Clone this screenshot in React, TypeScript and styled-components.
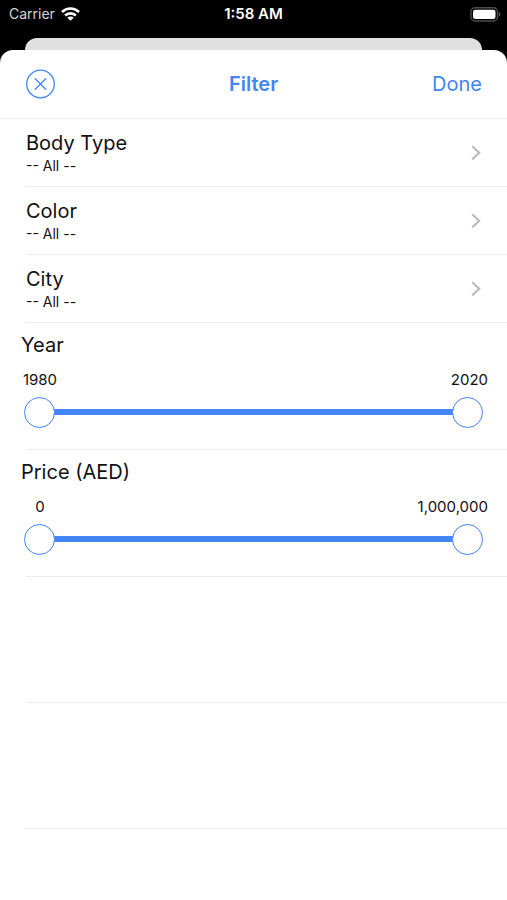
import React, { useId, useState } from 'react';
import styled, { createGlobalStyle } from 'styled-components';

const blue = '#4285f4';
const line = '#ececec';

const GlobalStyle = createGlobalStyle`
  * { box-sizing: border-box; }
  html, body { margin: 0; background: #fff; }
  body, button, input { font-family: Inter, 'Liberation Sans', sans-serif; }
  button { border: 0; padding: 0; background: none; color: inherit; cursor: pointer; }
`;

const Screen = styled.div`
  min-height: 100vh;
  display: flex;
  flex-direction: column;
  background: #000;
`;

const StatusBar = styled.header`
  display: grid;
  grid-template-columns: 1fr auto 1fr;
  align-items: center;
  height: 28px;
  padding: 0 6px;
  color: #fff;
  font-size: 14px;
  line-height: 16px;
`;

const Carrier = styled.span`
  display: flex;
  align-items: center;
  gap: 6px;
  padding-left: 3px;
  color: #d6d6d6;
`;

const Clock = styled.time`
  font-size: 15px;
  font-weight: 600;
`;

const BatterySlot = styled.span`
  display: flex;
  justify-content: flex-end;
`;

const BackCard = styled.div`
  height: 12px;
  margin: 10px 25px 0;
  border-radius: 12px 12px 0 0;
  background: #e0e0e0;
`;

const Sheet = styled.main`
  flex: 1;
  border-radius: 13px 13px 0 0;
  background: #fff;
  color: #111;
`;

const TitleBar = styled.div`
  display: grid;
  grid-template-columns: 1fr auto 1fr;
  align-items: center;
  height: 69px;
  padding: 0 25px;
  border-bottom: 1px solid ${line};
  color: ${blue};
`;

const CloseButton = styled.button`
  justify-self: start;
  display: flex;
`;

const Title = styled.h1`
  margin: 0;
  font-size: 20px;
  line-height: 24px;
  font-weight: 600;
`;

const DoneButton = styled.button`
  justify-self: end;
  font-size: 20px;
  line-height: 24px;
`;

const Group = styled.div`
  margin-left: 26px;
  border-bottom: 1px solid ${line};
`;

const PickerRow = styled.button`
  display: flex;
  align-items: center;
  justify-content: space-between;
  width: 100%;
  height: 67px;
  padding-right: 26px;
  text-align: left;
  color: #111;
`;

const PickerText = styled.span`
  display: flex;
  flex-direction: column;
`;

const Label = styled.span`
  font-size: 20px;
  line-height: 26px;
`;

const Value = styled.span`
  font-size: 14px;
  line-height: 20px;
`;

const RangeGroup = styled.section`
  height: 126px;
  padding-top: 9px;
`;

const RangeTitle = styled.h2`
  margin: 0 0 0 -5px;
  font-size: 20px;
  line-height: 26px;
  font-weight: 400;
`;

const RangeValues = styled.div`
  display: flex;
  justify-content: space-between;
  margin: 12px 19px 7px -4px;
`;

const RangeValue = styled.output`
  min-width: 36px;
  text-align: center;
  font-size: 15px;
  line-height: 20px;
`;

const SliderArea = styled.div`
  position: relative;
  height: 31px;
  margin: 0 24px 0 -2px;
`;

const Rail = styled.div`
  position: absolute;
  top: 12px;
  left: 15px;
  right: 15px;
  height: 6px;
  background: #d9d9d9;
`;

const Fill = styled.div`
  position: absolute;
  top: 0;
  bottom: 0;
  background: ${blue};
`;

const Thumb = styled.input`
  position: absolute;
  inset: 0;
  width: 100%;
  height: 31px;
  margin: 0;
  appearance: none;
  background: transparent;
  pointer-events: none;

  &::-webkit-slider-thumb {
    appearance: none;
    width: 31px;
    height: 31px;
    border: 1px solid ${blue};
    border-radius: 50%;
    background: #fff;
    pointer-events: auto;
    cursor: pointer;
  }
`;

const EmptyCell = styled.div`
  height: 125px;
`;

function WifiIcon() {
  return (
    <svg width="19" height="14" viewBox="0 0 19 14" fill="none" stroke="#fff" strokeWidth="2.6" aria-hidden="true">
      <path d="M1 5a12.2 12.2 0 0 1 17 0" />
      <path d="M4.1 8.5a7.8 7.8 0 0 1 10.8 0" />
      <path d="M9.5 13.8 6.3 10.8a4.5 4.5 0 0 1 6.4 0z" fill="#fff" stroke="none" />
    </svg>
  );
}

function BatteryIcon() {
  return (
    <svg width="31" height="15" viewBox="0 0 31 15" aria-hidden="true">
      <rect x="1" y="0.8" width="26.5" height="13.2" rx="4" fill="none" stroke="#4c4c4c" strokeWidth="1.4" />
      <rect x="3" y="2.8" width="22.5" height="9.2" rx="2.2" fill="#fff" />
      <path d="M28.8 5.1c2 .8 2 3.8 0 4.6z" fill="#5c5c5c" />
    </svg>
  );
}

function CloseIcon() {
  return (
    <svg width="30" height="30" viewBox="0 0 30 30" fill="none" stroke={blue} strokeWidth="1.3" aria-hidden="true">
      <circle cx="15.5" cy="15" r="13.8" />
      <path d="m10.2 9.7 10.6 10.6m0-10.6L10.2 20.3" strokeLinecap="round" />
    </svg>
  );
}

function Chevron() {
  return (
    <svg width="10" height="16" viewBox="0 0 10 16" fill="none" stroke="#bdbdbd" strokeWidth="2.2" aria-hidden="true">
      <path d="m1.2 1.2 7 6.6-7 6.6" />
    </svg>
  );
}

function Picker({ label, value }: { label: string; value: string }) {
  return (
    <Group>
      <PickerRow type="button">
        <PickerText>
          <Label>{label}</Label>
          <Value>{value}</Value>
        </PickerText>
        <Chevron />
      </PickerRow>
    </Group>
  );
}

interface RangeProps {
  label: string;
  min: number;
  max: number;
  step: number;
  format: (n: number) => string;
}

function Range({ label, min, max, step, format }: RangeProps) {
  const id = useId();
  const [low, setLow] = useState(min);
  const [high, setHigh] = useState(max);
  const percent = (n: number) => ((n - min) / (max - min)) * 100;

  return (
    <Group>
      <RangeGroup aria-labelledby={`${id}-title`}>
        <RangeTitle id={`${id}-title`}>{label}</RangeTitle>
        <RangeValues>
          <RangeValue htmlFor={`${id}-low`}>{format(low)}</RangeValue>
          <RangeValue htmlFor={`${id}-high`}>{format(high)}</RangeValue>
        </RangeValues>
        <SliderArea>
          <Rail>
            <Fill style={{ left: `${percent(low)}%`, right: `${100 - percent(high)}%` }} />
          </Rail>
          <Thumb
            id={`${id}-low`}
            type="range"
            aria-label={`${label} minimum`}
            min={min}
            max={max}
            step={step}
            value={low}
            onChange={(e) => setLow(Math.min(Number(e.target.value), high))}
          />
          <Thumb
            id={`${id}-high`}
            type="range"
            aria-label={`${label} maximum`}
            min={min}
            max={max}
            step={step}
            value={high}
            onChange={(e) => setHigh(Math.max(Number(e.target.value), low))}
          />
        </SliderArea>
      </RangeGroup>
    </Group>
  );
}

export default function App() {
  return (
    <>
      <GlobalStyle />
      <Screen>
        <StatusBar>
          <Carrier>
            Carrier
            <WifiIcon />
          </Carrier>
          <Clock>1:58 AM</Clock>
          <BatterySlot>
            <BatteryIcon />
          </BatterySlot>
        </StatusBar>
        <BackCard />
        <Sheet>
          <TitleBar>
            <CloseButton type="button" aria-label="Close">
              <CloseIcon />
            </CloseButton>
            <Title>Filter</Title>
            <DoneButton type="button">Done</DoneButton>
          </TitleBar>
          <Picker label="Body Type" value="-- All --" />
          <Picker label="Color" value="-- All --" />
          <Picker label="City" value="-- All --" />
          <Range label="Year" min={1980} max={2020} step={1} format={String} />
          <Range
            label="Price (AED)"
            min={0}
            max={1000000}
            step={1000}
            format={(n) => n.toLocaleString('en-US')}
          />
          <Group>
            <EmptyCell />
          </Group>
          <Group>
            <EmptyCell />
          </Group>
        </Sheet>
      </Screen>
    </>
  );
}
